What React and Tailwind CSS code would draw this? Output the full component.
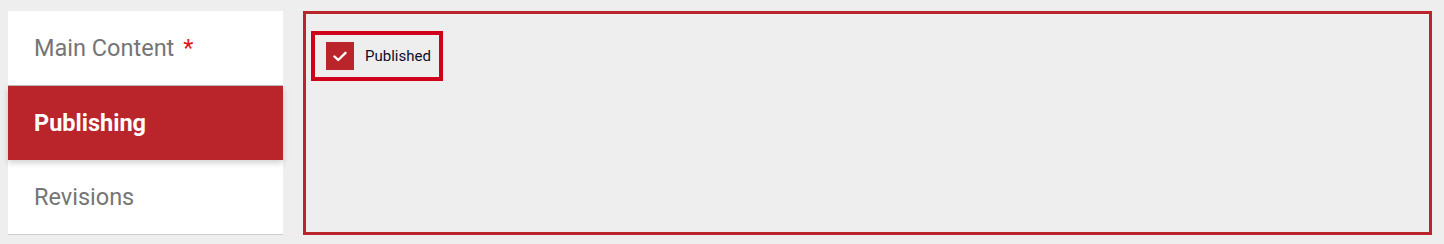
import React from "react";

const tabs = [
  { label: "Main Content", required: true },
  { label: "Publishing", active: true },
  { label: "Revisions" },
];

const Sidebar = () => (
  <div className="w-[275px] shrink-0 self-start bg-white flex flex-col border-b border-[#cccccc]">
    {tabs.map((tab, i) => (
      <div
        key={tab.label}
        className={
          tab.active
            ? "h-[74px] flex items-center pl-[26px] pt-[2px] bg-[#b9252b] text-white font-bold shadow-[0_3px_6px_rgba(0,0,0,0.18)] relative z-10"
            : i === 0
            ? "h-[75px] flex items-center pl-[26px] pt-[2px] text-[#757575] border-b border-[#bdbdbd]"
            : "h-[74px] flex items-center pl-[26px] pt-[2px] text-[#757575]"
        }
      >
        <span className="text-[23.5px] leading-none">
          {tab.label}
          {tab.required && <span className="text-[#e4141b] ml-[9px]">*</span>}
        </span>
      </div>
    ))}
  </div>
);

const App = () => {
  return (
    <div
      className="w-[1444px] h-[244px] bg-[#eeeeee] pt-[11px] pl-[8px] pr-[12px] flex items-start gap-[20px]"
      style={{ fontFamily: "Roboto, 'Liberation Sans', sans-serif" }}
    >
      <Sidebar />
      <div className="flex-1 h-[224px] border-[3px] border-[#b9252b] px-[5px] pt-[17px]">
        <label className="inline-flex items-center gap-[11px] border-4 border-[#d0021b] pl-[11px] pr-[8px] h-[50px]">
          <span className="w-[28px] h-[28px] bg-[#b9252b] flex items-center justify-center">
            <svg width="14" height="11" viewBox="0 0 14 11" fill="none">
              <path
                d="M1.5 5.5 L5.2 9 L12.5 1.8"
                stroke="white"
                strokeWidth="2.4"
                strokeLinecap="round"
                strokeLinejoin="round"
              />
            </svg>
          </span>
          <span className="text-[15px] text-[#0d0d2b]">Published</span>
        </label>
      </div>
    </div>
  );
};

export default App;
